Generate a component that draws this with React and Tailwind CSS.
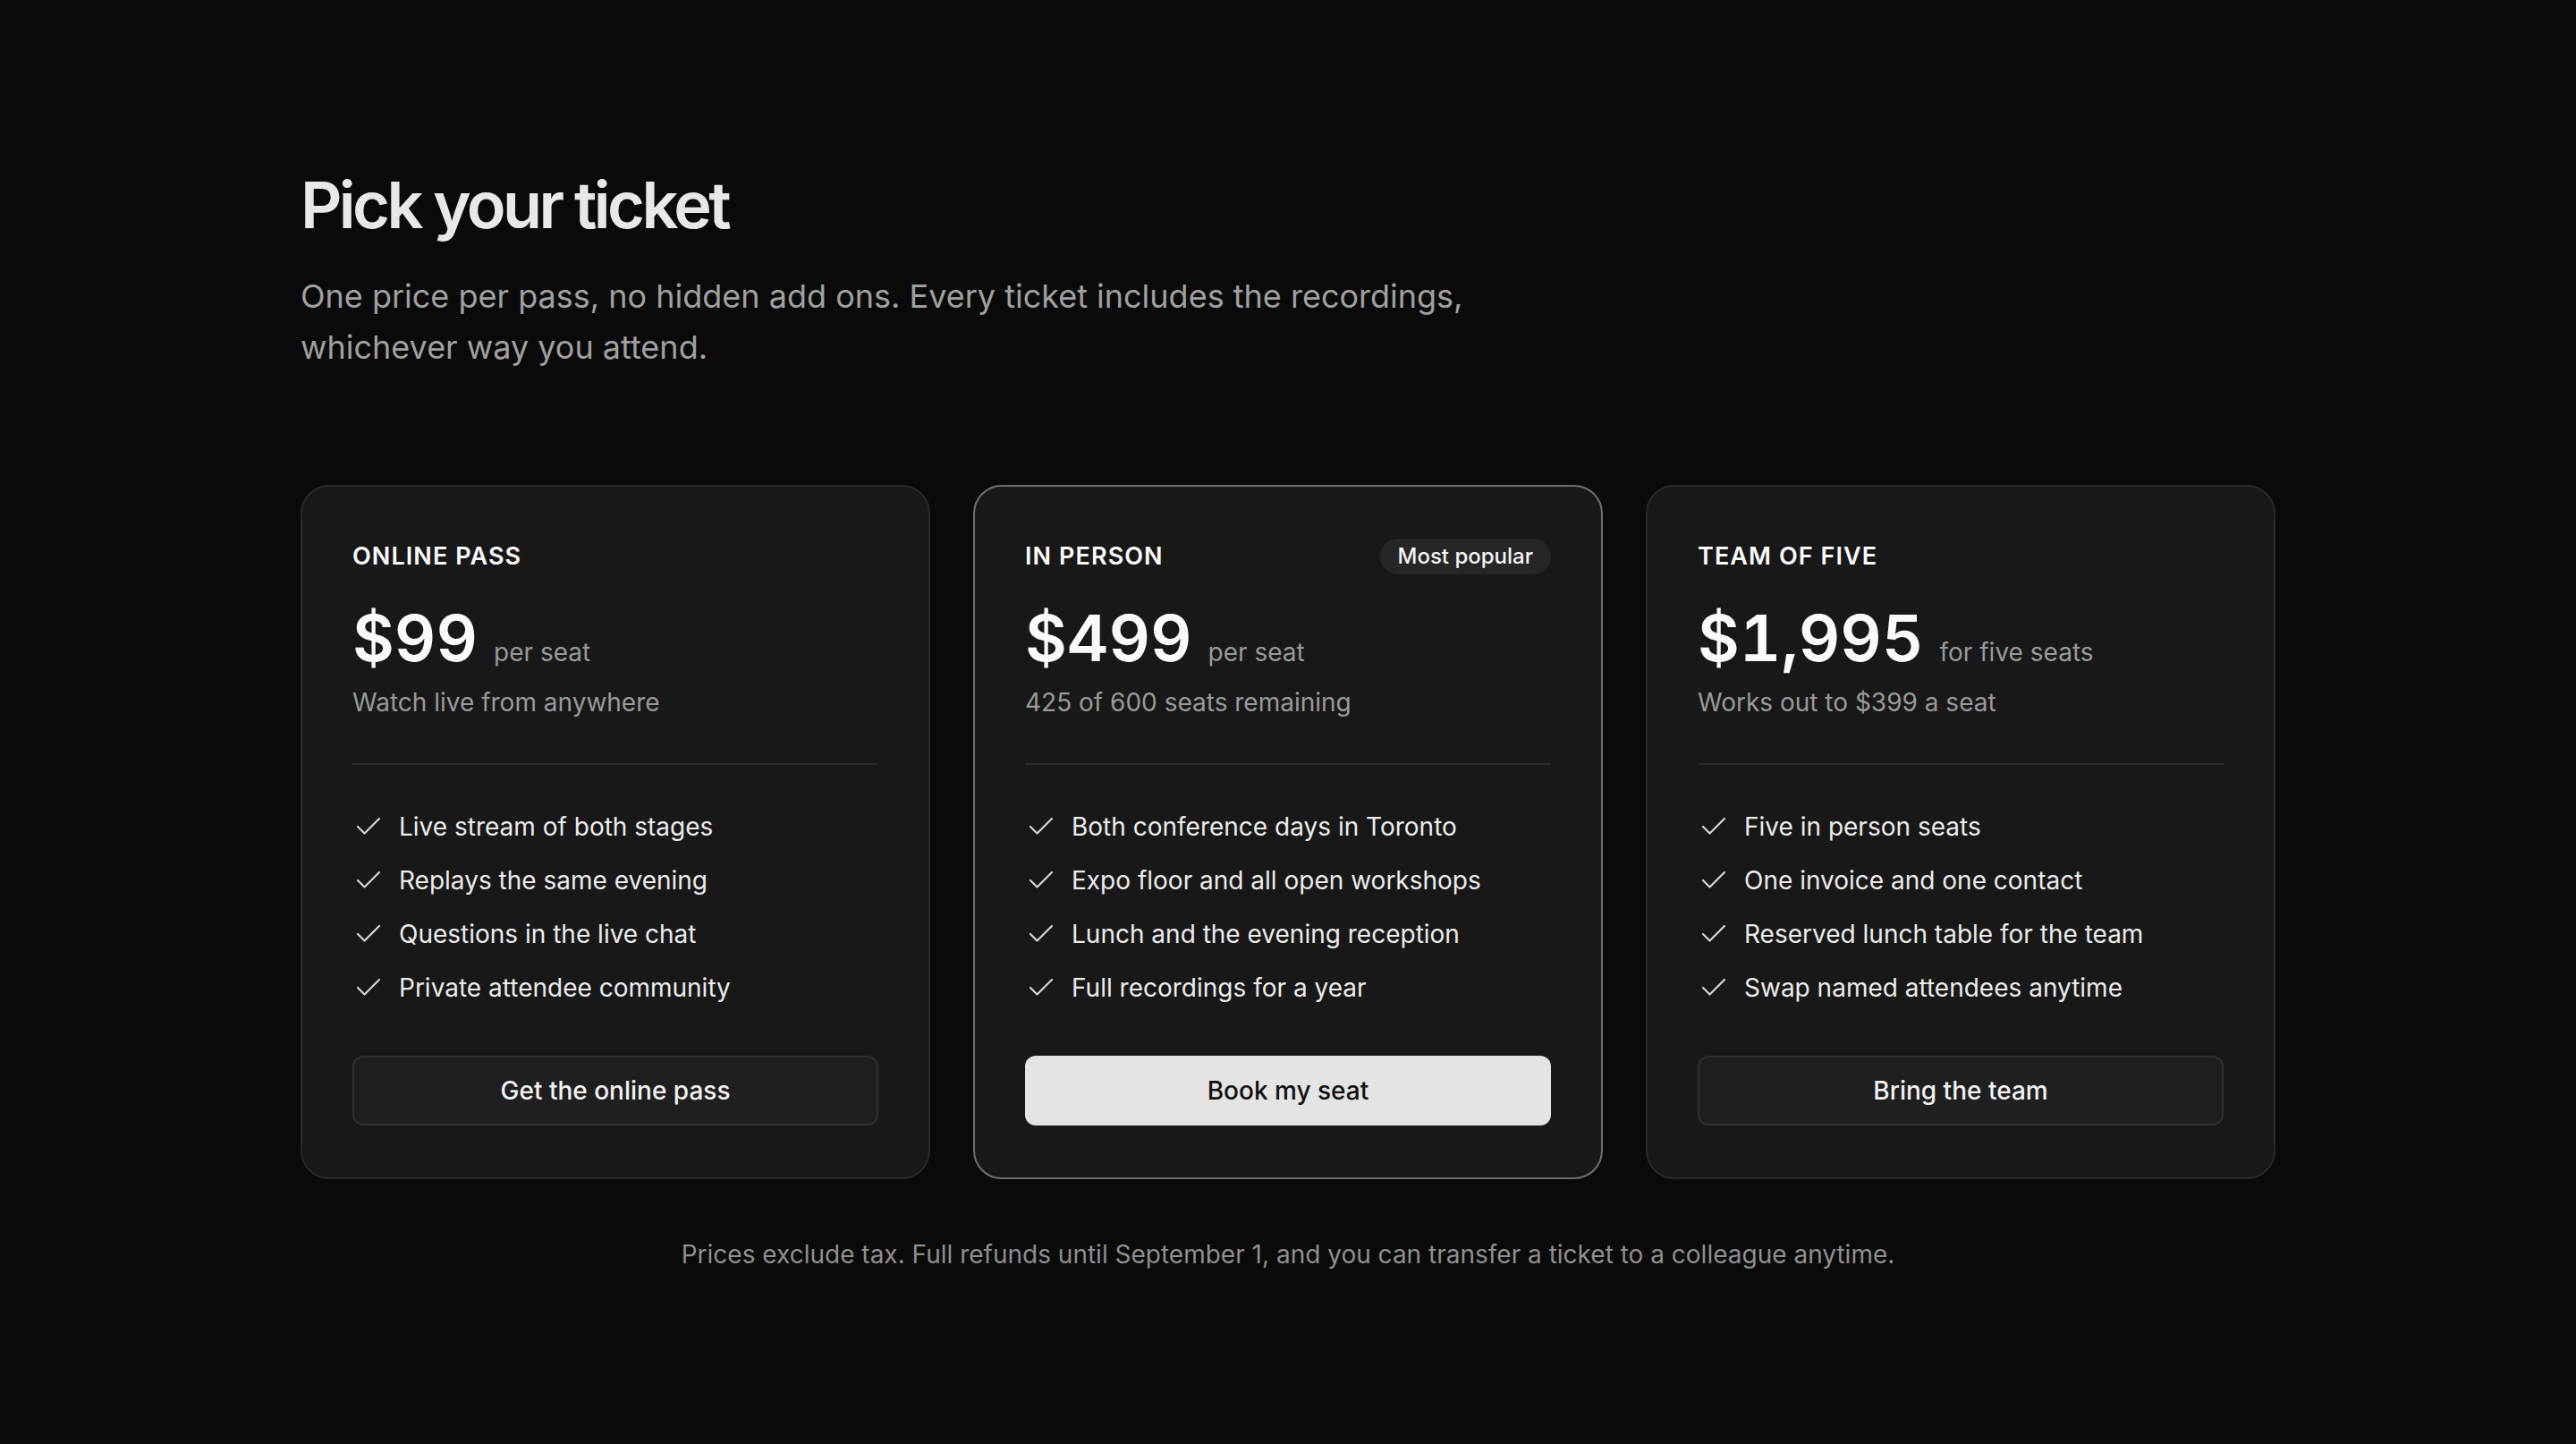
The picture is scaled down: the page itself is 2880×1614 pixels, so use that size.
import { Check } from 'lucide-react';

const tickets = [
    {
        name: 'ONLINE PASS',
        price: '$99',
        unit: 'per seat',
        note: 'Watch live from anywhere',
        features: [
            'Live stream of both stages',
            'Replays the same evening',
            'Questions in the live chat',
            'Private attendee community',
        ],
        cta: 'Get the online pass',
    },
    {
        name: 'IN PERSON',
        price: '$499',
        unit: 'per seat',
        note: '425 of 600 seats remaining',
        features: [
            'Both conference days in Toronto',
            'Expo floor and all open workshops',
            'Lunch and the evening reception',
            'Full recordings for a year',
        ],
        cta: 'Book my seat',
        featured: true,
    },
    {
        name: 'TEAM OF FIVE',
        price: '$1,995',
        unit: 'for five seats',
        note: 'Works out to $399 a seat',
        features: [
            'Five in person seats',
            'One invoice and one contact',
            'Reserved lunch table for the team',
            'Swap named attendees anytime',
        ],
        cta: 'Bring the team',
    },
];

function TicketCard({ ticket }) {
    const { name, price, unit, note, features, cta, featured } = ticket;
    return (
        <div
            className={
                featured
                    ? 'flex flex-col rounded-[32px] border-2 border-[#6f6f6f] bg-[#181818] px-[56px] pt-[58px] pb-[58px]'
                    : 'flex flex-col rounded-[32px] border-2 border-[#2a2a2a] bg-[#181818] px-[56px] pt-[58px] pb-[58px]'
            }
        >
            <div className="flex h-[40px] items-center justify-between">
                <h3 className="text-[27px] font-semibold tracking-[0.04em] text-[#fafafa]">{name}</h3>
                {featured && (
                    <span className="rounded-full bg-[#262626] px-[20px] text-[24px] font-medium leading-[40px] text-[#f5f5f5]">
                        Most popular
                    </span>
                )}
            </div>

            <div className="mt-[35px] flex items-baseline gap-[18px]">
                <span className="text-[72px] font-semibold leading-none tabular-nums text-[#fafafa]">{price}</span>
                <span className="text-[28px] leading-[40px] text-[#9a9a9a]">{unit}</span>
            </div>
            <p className="mt-[16px] text-[28px] leading-[40px] text-[#9a9a9a]">{note}</p>

            <div className="mt-[48px] h-[2px] bg-[#2a2a2a]" />

            <ul className="mt-[47px] flex flex-col gap-[16px]">
                {features.map((f) => (
                    <li key={f} className="flex items-center gap-[16px] text-[28px] leading-[44px] text-[#ececec]">
                        <Check size={36} strokeWidth={1.5} className="shrink-0 text-[#d4d4d4]" />
                        <span>{f}</span>
                    </li>
                ))}
            </ul>

            <button
                className={
                    featured
                        ? 'mt-[54px] h-[78px] rounded-[12px] bg-[#e4e4e4] text-[28px] font-medium text-[#111111]'
                        : 'mt-[54px] h-[78px] rounded-[12px] border-2 border-[#303030] bg-[#1f1f1f] text-[28px] font-medium text-[#f2f2f2]'
                }
            >
                {cta}
            </button>
        </div>
    );
}

export default function App() {
    return (
        <div className="min-h-screen w-full bg-[#0a0a0a] font-['Inter',sans-serif]">
            <div className="mx-auto w-[2208px] pt-[193px] pb-[120px]">
                <h1 className="text-[72px] font-semibold leading-none tracking-tighter text-[#e8e8e8]">Pick your ticket</h1>
                <p className="mt-[38px] max-w-[1360px] text-[36px] leading-[57px] text-[#a0a0a0]">
                    One price per pass, no hidden add ons. Every ticket includes the recordings, whichever way you attend.
                </p>

                <div className="mt-[125px] grid grid-cols-3 gap-[48px]">
                    {tickets.map((t) => (
                        <TicketCard key={t.name} ticket={t} />
                    ))}
                </div>

                <p className="mt-[64px] text-center text-[28px] leading-[40px] text-[#8f8f8f]">
                    Prices exclude tax. Full refunds until September 1, and you can transfer a ticket to a colleague anytime.
                </p>
            </div>
        </div>
    );
}
